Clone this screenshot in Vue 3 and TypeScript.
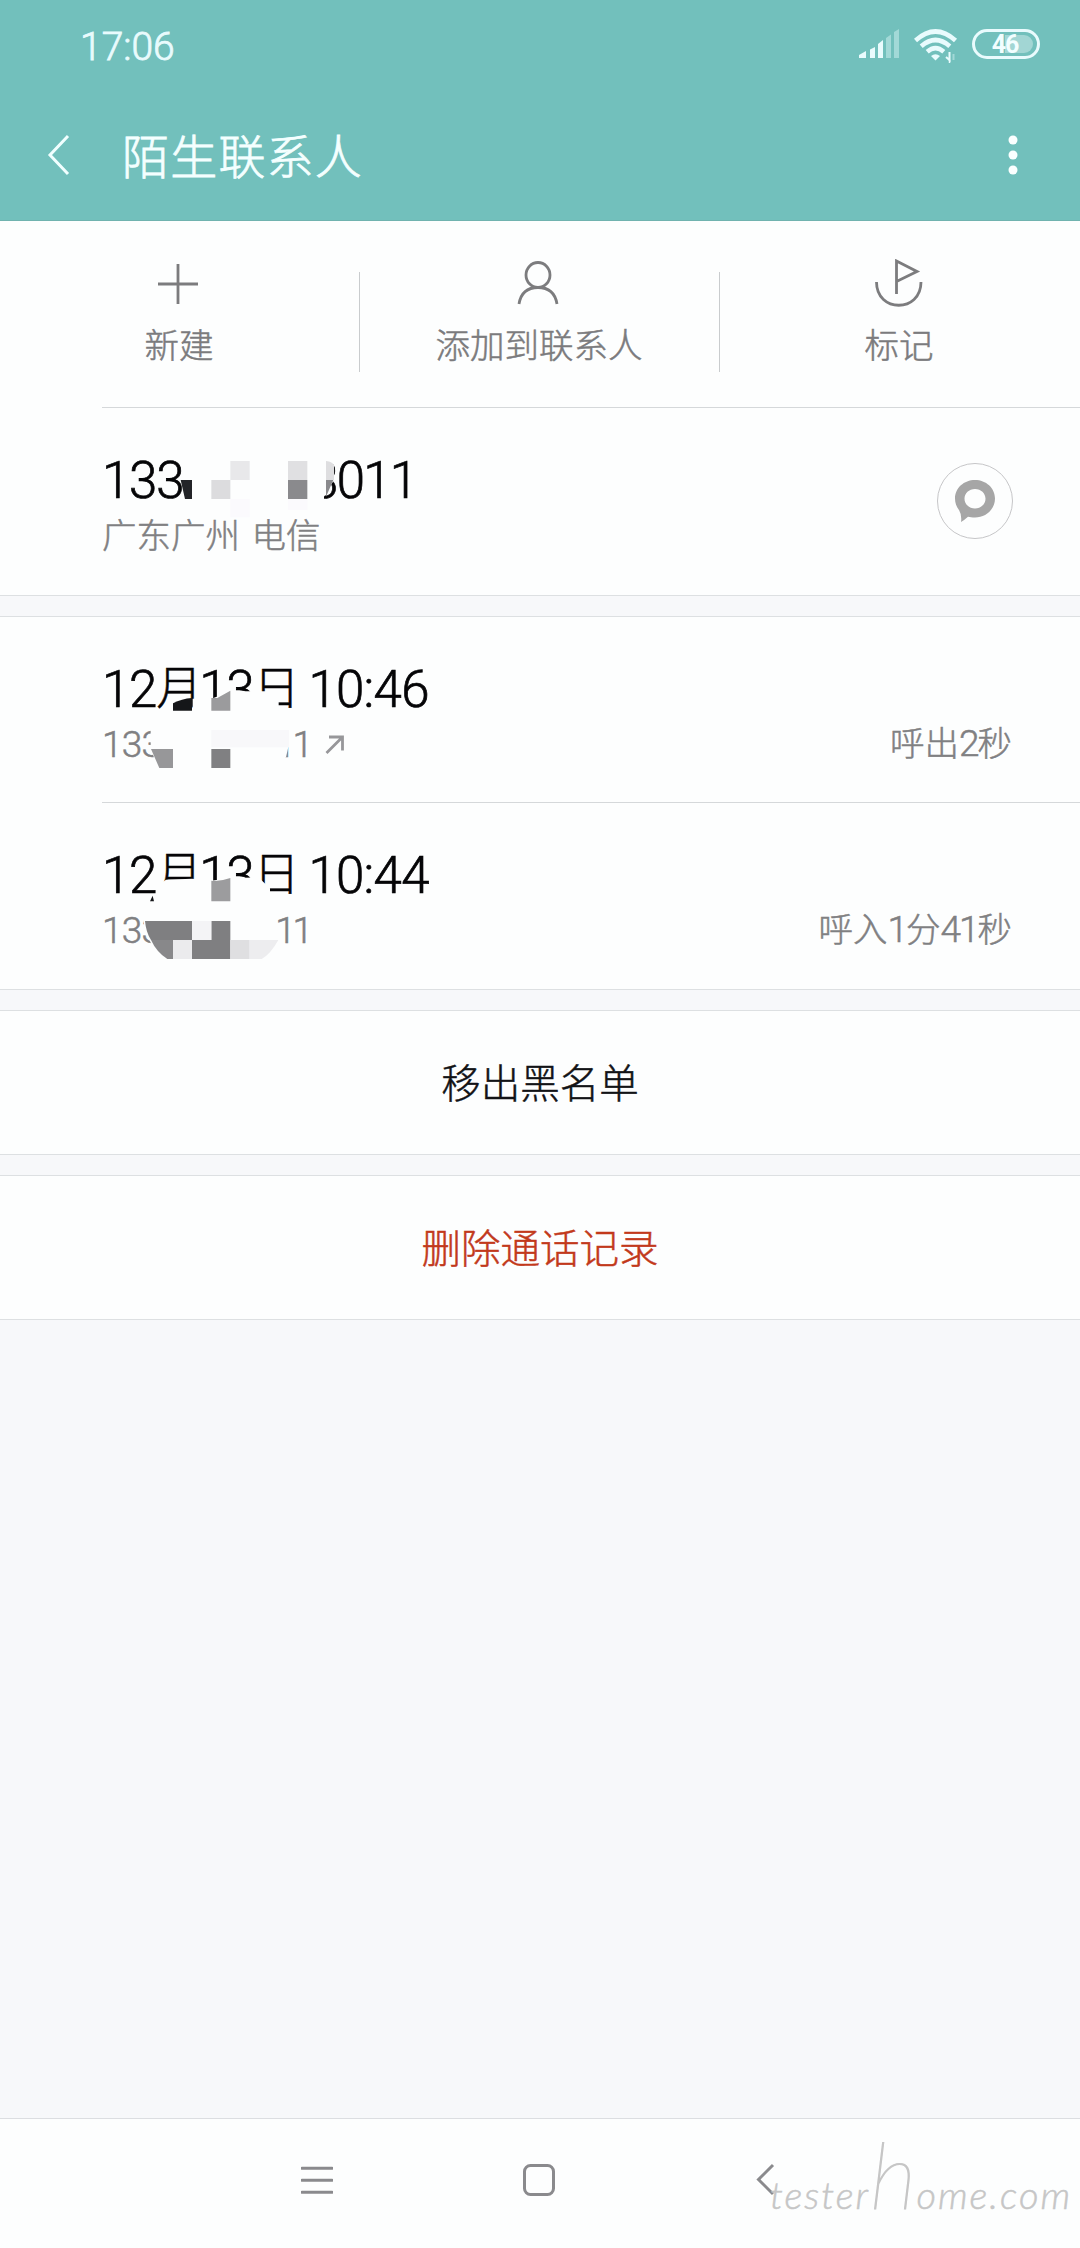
<script setup lang="ts">
interface Part { text: string; num?: boolean }
interface CallRecord {
  id: number
  date: Part[]
  time: string
  outgoing: boolean
  duration: Part[]
}

const title = '陌生联系人'

const records: CallRecord[] = [
  {
    id: 1,
    date: [{ text: '12', num: true }, { text: '月' }, { text: '13', num: true }, { text: '日' }],
    time: '10:46',
    outgoing: true,
    duration: [{ text: '呼出' }, { text: '2', num: true }, { text: '秒' }],
  },
  {
    id: 2,
    date: [{ text: '12', num: true }, { text: '月' }, { text: '13', num: true }, { text: '日' }],
    time: '10:44',
    outgoing: false,
    duration: [{ text: '呼入' }, { text: '1', num: true }, { text: '分' }, { text: '41', num: true }, { text: '秒' }],
  },
]
</script>

<template>
  <div class="screen">
    <header class="top">
      <div class="status">
        <span class="clock">17:06</span>
        <div class="status-icons">
          <svg class="signal" width="42" height="30" viewBox="0 0 42 30">
            <path d="M0 29V26L7 22V29Z M11 29V20.500L16 18V29Z M19 29V15L24 11V29Z" fill="#e9fbfd" />
            <path d="M27 29V9L32 5.500V29Z M35 29V3L40 0V29Z" fill="#a2d9d7" />
          </svg>
          <svg class="wifi" width="44" height="36" viewBox="0 0 44 36">
            <g fill="none" stroke="#e9fbfd" stroke-width="4.600">
              <path d="M1.500 11.500Q21.500-6.500 41.500 11.500" />
              <path d="M7.200 17.200Q21.500 4.800 35.800 17.200" />
              <path d="M13.200 22.800Q21.500 15.600 29.800 22.800" />
            </g>
            <path d="M17 27Q21.500 23.500 26 27L21.500 31.500Z" fill="#e9fbfd" />
            <path d="M32 28L35.500 31V23" fill="none" stroke="#e9fbfd" stroke-width="2" />
            <path d="M35.500 31V34" stroke="#e9fbfd" stroke-width="1.500" />
            <path d="M39.500 25V31" stroke="#a2d9d7" stroke-width="2" />
          </svg>
          <div class="battery"><i class="level"></i><b>46</b></div>
        </div>
      </div>
      <div class="bar">
        <svg class="back" width="24" height="42" viewBox="0 0 24 42">
          <path d="M21 2L3 21L21 40" fill="none" stroke="#f1ffff" stroke-width="3" />
        </svg>
        <h1>{{ title }}</h1>
        <svg class="more" width="10" height="40" viewBox="0 0 10 40" fill="#fbffff">
          <circle cx="5" cy="5" r="4.500" /><circle cx="5" cy="20" r="4.500" /><circle cx="5" cy="35" r="4.500" />
        </svg>
      </div>
    </header>

    <section class="actions">
      <div class="action">
        <svg width="50" height="50" viewBox="0 0 50 50">
          <path d="M24 5V45M4 25H44" />
        </svg>
        <span>新建</span>
      </div>
      <div class="action">
        <svg width="50" height="50" viewBox="0 0 50 50">
          <ellipse cx="24" cy="16" rx="12" ry="12.500" />
          <path d="M5 45C7 33 14 28.500 24 28.500S41 33 43 45" />
        </svg>
        <span>添加到联系人</span>
      </div>
      <div class="action">
        <svg width="50" height="50" viewBox="0 0 50 50">
          <path d="M22.500 35V2L43 12.500L22.500 22.500" />
          <path d="M2.500 23C2.500 54 47 54 47 23" />
        </svg>
        <span>标记</span>
      </div>
    </section>

    <section class="phone">
      <div class="lines">
        <div class="big phone-no"><span class="d">133</span><span class="d tail">3011</span></div>
        <div class="small place">广东广州 电信</div>
      </div>
      <div class="msg">
        <svg width="44" height="46" viewBox="0 0 44 46">
          <path fill-rule="evenodd" fill="#a6a6a6" d="M22 2C33 2 42 10 42 20.500S33 39.500 22 39.500C19 39.500 17 39.300 15 38.800Q11.500 42 8 44Q9 37 6 32C3.500 29 2 25 2 20.500C2 10 11 2 22 2ZM22 11C16 11 11.500 15.300 11.500 20.700S16 30.400 22 30.400S32.500 26.100 32.500 20.700S28 11 22 11Z" />
        </svg>
      </div>
      <svg class="mosaic m0" width="400" height="90" viewBox="0 0 1200 270">
        <path d="M690 85H755L762 107V150L732 200V215H690Z" fill="#fdfefe" />
        <path d="M302 150H336V207H315Z" fill="#232428" />
        <path d="M394 150H451V207H394Z" fill="#dcdcde" />
        <path d="M451 93H509V150H451Z" fill="#e8e8ea" />
        <path d="M624 93H682V150H624Z" fill="#e0e0e2" />
        <path d="M624 150H682V207H624Z" fill="#8a8a8d" />
        <path d="M738 93Q758 95 762 107V150H738Z" fill="#dedee0" />
        <path d="M738 150H760L738 200Z" fill="#8a8a8d" />
        <path d="M451 207H509V262H451Z M624 207H682V240H624Z" fill="#fbfafd" />
      </svg>
    </section>

    <div class="gap"></div>

    <section v-for="r in records" :key="r.id" class="record">
      <div class="lines">
        <div class="big">
          <span v-for="(p, i) in r.date" :key="i" :class="p.num ? 'd' : 'han'">{{ p.text }}</span><span class="d time">{{ r.time }}</span>
        </div>
        <div class="small no"><span class="n">133</span><span class="n end">11</span>
          <svg v-if="r.outgoing" class="out" width="20" height="20" viewBox="0 0 20 20">
            <path d="M1.500 18L17 2.500M4 2H17.500V15.500" fill="none" stroke="#97979a" stroke-width="2.800" />
          </svg>
        </div>
      </div>
      <div class="small duration"><span v-for="(p, i) in r.duration" :key="i" :class="{ n: p.num }">{{ p.text }}</span></div>
      <svg v-if="r.id === 1" class="mosaic m1" width="400" height="135" viewBox="0 0 1200 405">
        <path d="M338 176H394L455 154H618V183L596 181V214H338Z" fill="#fdfefe" />
        <path d="M279 190Q305 176 336 174V212H279Z" fill="#151619" />
        <path d="M394 174H412L451 152V212H394Z" fill="#9b9b9d" />
        <path d="M212 262H627V312L618 352H222L212 327Z" fill="#fdfefe" />
        <path d="M394 270H627V322H394Z" fill="#f8f8fa" />
        <path d="M213 327H279V384H238Z" fill="#979799" />
        <path d="M394 327H451V384H394Z" fill="#808082" />
      </svg>
      <svg v-else class="mosaic m2" width="400" height="135" viewBox="0 0 1200 405">
        <path d="M222 212Q240 160 258 152L336 149L394 155L451 147L535 145L570 178V214H222Z" fill="#fdfefe" />
        <path d="M210 217L218 200L222 217Z" fill="#151619" />
        <path d="M394 155Q420 158 451 147V217H394Z" fill="#9c9c9e" />
        <path d="M196 255H590V360H225Q200 330 190 276Z" fill="#fdfefe" />
        <path d="M195 276H336V333H213Q198 310 195 276Z M394 276H451V390H336V333H394Z" fill="#7f7f81" />
        <path d="M213 333H279V390H262Q230 370 213 333Z" fill="#88888a" />
        <path d="M336 276H394V333H336Z" fill="#f4f4f6" />
        <path d="M279 333H336V390H279Z" fill="#ebebed" />
        <path d="M451 333H509V390H451Z" fill="#dfdfe1" />
        <path d="M509 333H595Q572 375 545 390H509Z" fill="#ededef" />
      </svg>
    </section>

    <div class="gap"></div>
    <button class="wide">移出黑名单</button>
    <div class="gap"></div>
    <button class="wide danger">删除通话记录</button>
    <div class="rest"></div>

    <footer class="nav">
      <svg class="menu" width="32" height="32" viewBox="0 0 32 32">
        <path d="M1 4.200H31M1 16.200H31M1 28.200H31" stroke-linecap="round" />
      </svg>
      <svg class="home" width="34" height="34" viewBox="0 0 34 34">
        <rect x="2.500" y="2.500" width="29" height="29" rx="6" />
      </svg>
      <svg class="prev" width="20" height="34" viewBox="0 0 20 34">
        <path d="M17 2L2.500 16.500L17 31" />
      </svg>
      <div class="watermark">tester<span class="tall">h</span>ome.com</div>
    </footer>
  </div>
</template>

<style>
body { background: #f7f8fa; }
</style>

<style scoped>
.screen {
  width: 1080px;
  height: 2248px;
  display: flex;
  flex-direction: column;
  overflow: hidden;
  background: #f7f8fa;
  font-family: "Noto Sans CJK SC", "Noto Sans", sans-serif;
  font-weight: 300;
  -webkit-text-stroke: 0.5px currentColor;
}
.top {
  box-sizing: border-box;
  height: 221px;
  flex: none;
  background: #72c0bc;
  border-bottom: 1px solid #70b3af;
}
.status {
  height: 90px;
  display: flex;
  justify-content: space-between;
  align-items: flex-start;
  padding: 0 40px 0 80px;
}
.clock {
  margin-top: 22px;
  font-family: "Roboto", sans-serif;
  font-size: 39px;
  line-height: 50px;
  color: #e9fbfd;
  -webkit-text-stroke-width: 0.8px;
}
.status-icons { display: flex; align-items: flex-start; padding-top: 29px; }
.wifi { margin-left: 13px; }
.battery {
  position: relative;
  box-sizing: border-box;
  width: 68px;
  height: 30px;
  margin-left: 14px;
  border: 3px solid #e9fbfd;
  border-radius: 15px;
  display: flex;
  justify-content: center;
  align-items: center;
}
.battery .level {
  position: absolute;
  left: 30px;
  top: 3px;
  width: 28px;
  height: 18px;
  border-radius: 0 9px 9px 0;
  background: #a2d6d4;
}
.battery b {
  position: relative;
  margin: 2px 2px 0 0;
  font: 700 25px/24px "Roboto", sans-serif;
  -webkit-text-stroke-width: 0;
  letter-spacing: -1px;
  color: #f2feff;
}
.bar { height: 130px; display: flex; align-items: center; padding: 0 62px 0 47px; }
h1 {
  flex: 1;
  margin: 0 0 2px 51px;
  font-size: 47px;
  line-height: 70px;
  font-weight: 300;
  letter-spacing: 1.2px;
  color: #f4ffff;
  -webkit-text-stroke-width: 0.8px;
}
.actions {
  position: relative;
  flex: none;
  height: 186px;
  display: flex;
  background: #fdfefe;
  padding-bottom: 1px;
}
.actions::after, .record + .record::before {
  content: "";
  position: absolute;
  left: 102px;
  right: 0;
  height: 1px;
  background: #d5d8da;
}
.actions::after { bottom: 0; }
.action {
  position: relative;
  flex: 1;
  display: flex;
  flex-direction: column;
  align-items: center;
  padding: 38px 2px 0 0;
}
.action + .action::before {
  content: "";
  position: absolute;
  left: -1px;
  top: 51px;
  width: 1px;
  height: 100px;
  background: #c9ccce;
}
.action svg { fill: none; stroke: #7c7c7e; stroke-width: 2.800; }
.action span { font-size: 34.500px; line-height: 50px; margin-top: 9px; color: #7b7b7d; }
.phone, .record {
  position: relative;
  box-sizing: border-box;
  flex: none;
  display: flex;
  justify-content: space-between;
  background: #fdfefe;
  padding: 0 68px 0 102px;
}
.phone { height: 187px; }
.record { height: 185px; }
.record + .record { height: 187px; padding-top: 1px; }
.record + .record::before { top: 0; }
.lines { padding-top: 43px; }
.big { font-size: 50px; line-height: 60px; height: 60px; color: #050507; white-space: nowrap; display: flex; align-items: baseline; }
.big .han { position: relative; top: -3px; font-size: 46px; line-height: 50px; letter-spacing: -3px; }
.d, .small .n { font-family: "Roboto", sans-serif; }
.d { font-size: 51px; letter-spacing: -1.200px; -webkit-text-stroke-width: 0.7px; }
.big .time { margin-left: 12px; letter-spacing: -0.700px; }
.phone-no .tail { margin-left: 127px; letter-spacing: -1.800px; }
.small { font-size: 34.500px; line-height: 48px; height: 48px; margin-top: 1px; color: #808082; white-space: nowrap; }
.place { margin-top: -2px; word-spacing: 4px; }
.small .n { font-size: 37px; letter-spacing: -0.800px; }
.no { display: flex; align-items: baseline; }
.small.no .end { margin-left: 114px; letter-spacing: -3.300px; }
.out { margin-left: 15px; align-self: center; }
.duration { margin-top: 100px; }
.duration .n { letter-spacing: -2px; }
.mosaic { position: absolute; left: 80px; }
.m0 { top: 22px; }
.m1 { top: 23px; }
.m2 { top: 27px; }
.msg {
  box-sizing: border-box;
  width: 76px;
  height: 76px;
  margin: 55px -1px 0 0;
  border: 1px solid #c6c6c8;
  border-radius: 50%;
  display: flex;
  align-items: center;
  justify-content: center;
}
.gap {
  box-sizing: border-box;
  flex: none;
  height: 22px;
  border-top: 1px solid #dde0e2;
  border-bottom: 1px solid #dde0e2;
}
.wide {
  box-sizing: border-box;
  flex: none;
  height: 143px;
  border: 0;
  padding: 0 0 4px;
  background: #fdfefe;
  font: inherit;
  font-size: 39.500px;
  line-height: 60px;
  color: #121316;
}
.danger { color: #c2391b; }
.rest { flex: 1; border-top: 1px solid #dde0e2; }
.nav {
  position: relative;
  box-sizing: border-box;
  flex: none;
  height: 130px;
  display: flex;
  align-items: flex-start;
  padding: 44px 0 0 301px;
  border-top: 1px solid #dcdee1;
  background: #fdfefe;
}
.nav svg { fill: none; stroke: #8a8a8d; stroke-width: 3; }
.menu { margin-top: 1px; }
.home { margin-left: 189px; }
.prev { margin-left: 200px; }
.watermark {
  position: absolute;
  left: 770px;
  top: 40px;
  font: italic 300 38px/70px "Lato", sans-serif;
  letter-spacing: 2px;
  color: #c6c6c6;
  white-space: nowrap;
}
.watermark .tall { font-size: 92px; line-height: 0; font-weight: 100; -webkit-text-stroke-width: 1.2px; letter-spacing: 0; }
</style>
